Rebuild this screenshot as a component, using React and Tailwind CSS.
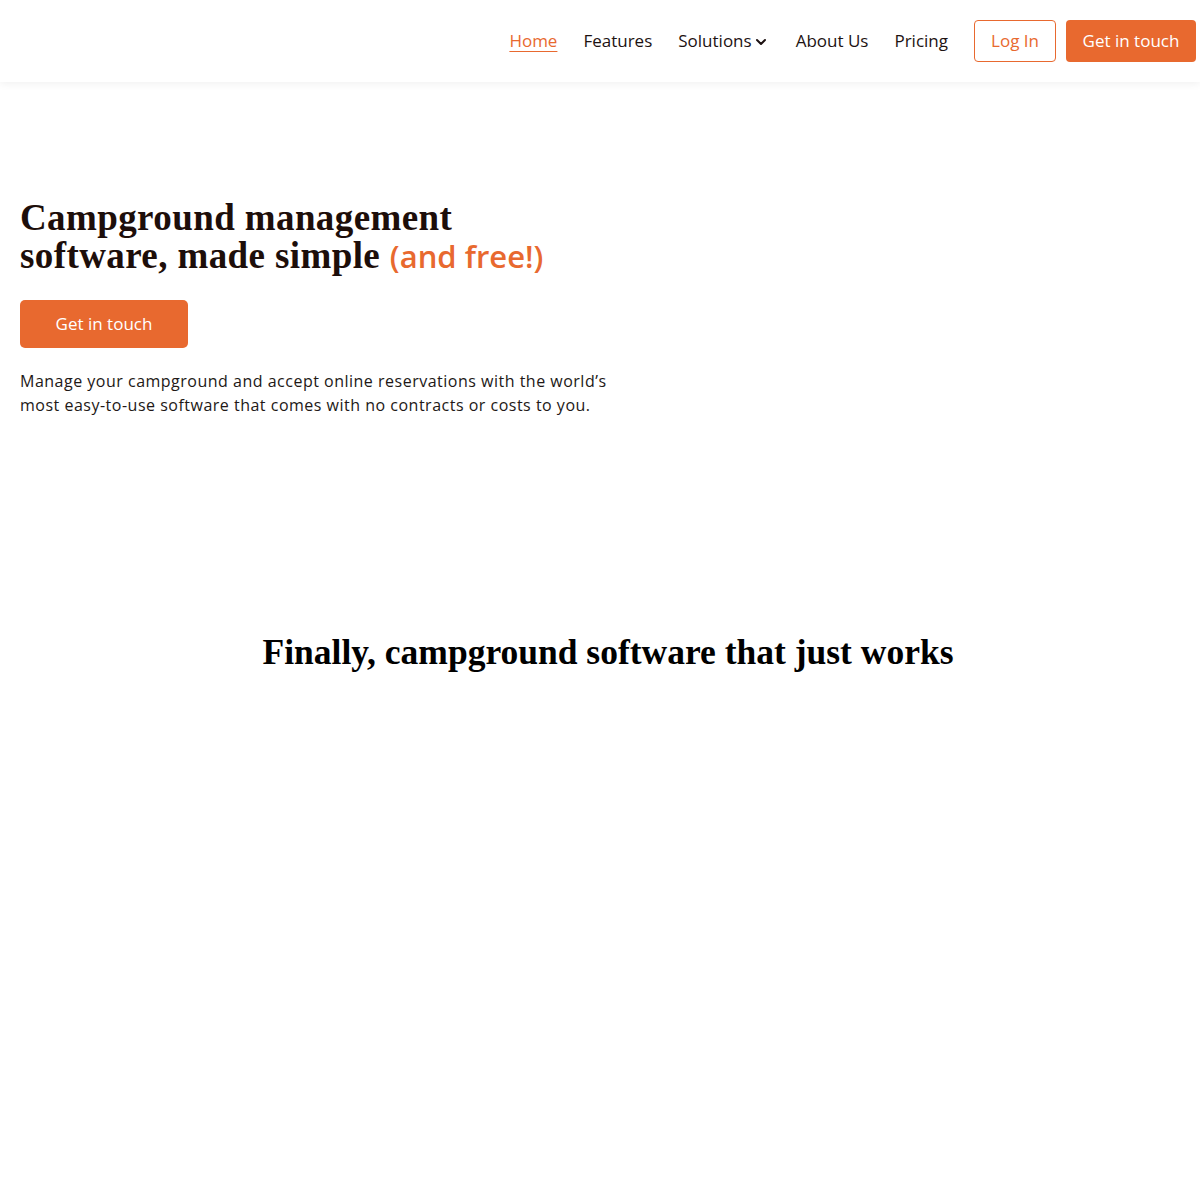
import { ChevronDown } from "lucide-react";

const sans = { fontFamily: '"Open Sans", "Noto Sans", sans-serif' };
const serif = { fontFamily: '"Liberation Serif", "Times New Roman", serif' };

function Header() {
  return (
    <header className="h-[82px] bg-white shadow-[0_2px_8px_rgba(0,0,0,0.06)] flex items-center justify-end pr-[4px]">
      <nav className="flex items-center text-[17px] text-[#1d1212]">
        <a href="#" className="text-[#e8692f] underline underline-offset-4 decoration-1">
          Home
        </a>
        <a href="#" className="ml-[26px]">Features</a>
        <a href="#" className="ml-[26px] flex items-center">
          Solutions
          <ChevronDown size={16} strokeWidth={3} className="ml-[1px] mt-[2px]" />
        </a>
        <a href="#" className="ml-[27px]">About Us</a>
        <a href="#" className="ml-[26px]">Pricing</a>
        <a
          href="#"
          className="ml-[26px] h-[42px] w-[82px] flex items-center justify-center border border-[#e8692f] rounded-[4px] text-[#e8692f]"
        >
          Log In
        </a>
        <a
          href="#"
          className="ml-[10px] h-[42px] w-[130px] flex items-center justify-center rounded-[4px] bg-[#e8692f] text-white"
        >
          Get in touch
        </a>
      </nav>
    </header>
  );
}

export default function App() {
  return (
    <div className="min-h-[1200px] bg-white" style={sans}>
      <Header />

      {/* Hero */}
      <section className="px-[20px] pt-[117px]">
        <h1 className="text-[37px] leading-[38px] font-bold text-[#1d0e0a] tracking-[0.4px]" style={serif}>
          Campground management
          <br />
          software, made simple{" "}
          <span className="text-[#e8692f] text-[31px] font-semibold tracking-normal" style={sans}>
            (and free!)
          </span>
        </h1>
        <a
          href="#"
          className="mt-[25px] w-[168px] h-[48px] flex items-center justify-center rounded-[5px] bg-[#e8692f] text-white text-[17px]"
        >
          Get in touch
        </a>
        <p className="mt-[21px] text-[16px] leading-[24px] text-[#221816] tracking-[0.5px]">
          Manage your campground and accept online reservations with the world’s
          <br />
          most easy-to-use software that comes with no contracts or costs to you.
        </p>
      </section>

      {/* Intro */}
      <section className="pt-[215px] flex justify-center pl-[16px]">
        <h2 className="text-[35.5px] leading-[40px] font-bold text-black" style={serif}>
          Finally, campground software that just works
        </h2>
      </section>
    </div>
  );
}
